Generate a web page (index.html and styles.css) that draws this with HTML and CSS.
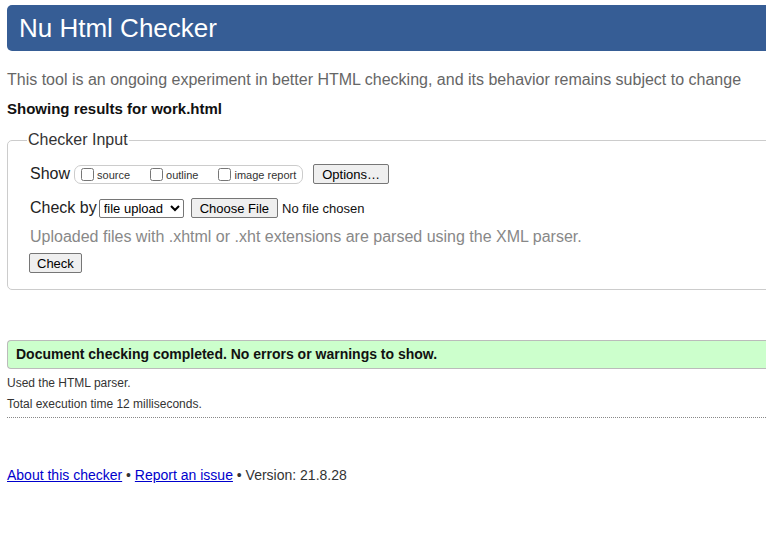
FILE: index.html
```html
<!DOCTYPE html>
<html>
	<head>
		<meta charset="UTF-8">
		<title>Nu Html Checker</title>
		<link rel="stylesheet" href="styles.css">
	</head>
	<body>
		<div id="page">
			<h1>Nu Html Checker</h1>
			<p class="intro">This tool is an ongoing experiment in better HTML checking, and its behavior remains subject to change</p>
			<h2>Showing results for work.html</h2>
			<fieldset class="input">
				<legend>Checker Input</legend>
				<div class="row">
					<span class="lbl">Show</span>
					<span class="opts">
						<label><input type="checkbox">source</label>
						<label><input type="checkbox">outline</label>
						<label><input type="checkbox">image report</label>
					</span>
					<button class="btn">Options…</button>
				</div>
				<div class="row">
					<span class="lbl">Check by</span>
					<select class="sel"><option>file upload</option></select>
					<button class="btn file">Choose File</button>
					<span class="nofile">No file chosen</span>
				</div>
				<p class="note">Uploaded files with .xhtml or .xht extensions are parsed using the XML parser.</p>
				<button class="btn check">Check</button>
			</fieldset>
			<div class="success">Document checking completed. No errors or warnings to show.</div>
			<p class="small">Used the HTML parser.</p>
			<p class="small">Total execution time 12 milliseconds.</p>
			<hr class="dots">
			<p class="foot"><a href="#">About this checker</a> &bull; <a href="#">Report an issue</a> &bull; Version: 21.8.28</p>
		</div>
	</body>
</html>
```
FILE: styles.css
```css
* {margin:0; padding:0; box-sizing:border-box;}
html, body {overflow:hidden;}
body {margin:0; font-family:"Liberation Sans", Arial, sans-serif; color:#222; background:#fff;}
#page {width:800px; padding:5px 0 0 7px;}
h1 {background:#365d95; color:#fff; font-weight:normal; font-size:26px; height:46px; line-height:46px; padding-left:12px; border-radius:5px 0 0 5px;}
.intro {color:#666; font-size:16px; margin-top:19px; line-height:20px;}
h2 {font-size:15px; margin-top:10px; line-height:18px; color:#111;}
.input {border:1px solid #ccc; border-radius:5px; margin-top:13px; padding:8px 0 14px 22px; height:159px;}
.input legend {font-size:16px; padding:0 1px; margin-left:-3px; color:#333;}
.row {display:flex; align-items:center; margin-top:6px; height:22px;}
.row + .row {margin-top:12px;}
.lbl {font-size:16px; color:#222; margin-right:4px;}
.opts {display:flex; align-items:center; border:1px solid #ccc; border-radius:7px; height:19px; padding:0 6px 0 6px; gap:0 20px; font-size:11px; color:#333; margin-right:10px;}
.opts label {display:flex; align-items:center; padding-top:2px;}
.opts input {width:13px; height:13px; margin:-2px 3px 0 0;}
.btn {font-family:"Liberation Sans", Arial, sans-serif; font-size:13px; background:#efefef; border:1px solid #767676; border-radius:2px; padding:1px 8px; height:20px; color:#000;}
.btn.file {margin-left:7px;}
.sel {font-family:"Liberation Sans", Arial, sans-serif; font-size:13px; height:19px; width:85px; border:1px solid #767676; border-radius:2px; background:#fff; color:#000; margin-left:-2px;}
.nofile {font-size:13px; margin-left:4px; color:#111;}
.note {color:#888; font-size:16px; margin-top:9px; line-height:18px;}
.btn.check {margin-top:7px; margin-left:-1px; padding:1px 7px;}
.success {margin-top:50px; background:#ccffcc; border:1px solid #bbb; border-right:0; border-radius:4px 0 0 4px; height:29px; line-height:27px; padding-left:8px; font-weight:bold; font-size:14px; color:#111;}
.small {font-size:12px; color:#333; line-height:14px; margin-top:7px;}
.small + .small {margin-top:7px;}
.dots {border:0; border-top:1px dotted #888; margin-top:6px;}
.foot {margin-top:49px; font-size:14px; color:#333;}
.foot a {color:#00c;}
```
